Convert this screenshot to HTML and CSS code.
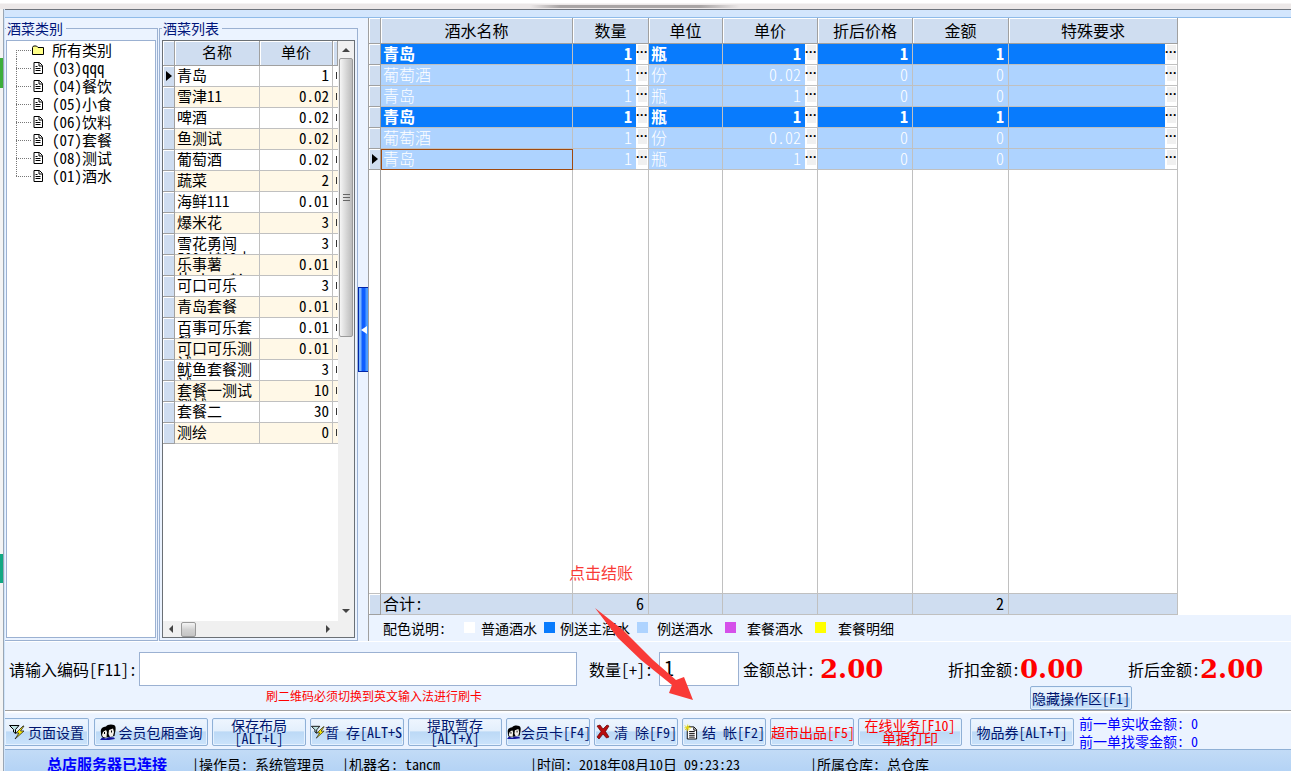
FILE: index.html
```html
<!DOCTYPE html>
<html lang="zh-CN">
<head>
<meta charset="utf-8">
<title>酒水点单</title>
<link rel="stylesheet" href="styles.css">
</head>
<body>
<svg class="symbols" aria-hidden="true">
  <symbol id="i-doc" viewBox="0 0 12 12"><path d="M2 .5h5.500L10.500 3.500v8H2z" fill="#fff" stroke="#000"/><path d="M7 1v3h3M3.500 4.500h2M3.500 6.500h5M3.500 8.500h5" fill="none" stroke="#000"/></symbol>
  <symbol id="i-folder" viewBox="0 0 12 12"><path d="M.5 10.500v-7l1-1.500h3l1.500 1.500h5.500v7z" fill="#ffff88" stroke="#000"/></symbol>
  <symbol id="i-filter" viewBox="0 0 16 16"><path d="M.5 1.500h9.500L6.500 5.500v4L4.500 8V5.500z" fill="#bfe3e3" stroke="#000"/><path d="M14 2L7 9h3l-4 6 9-8h-3.500l3.500-5z" fill="#ffee00" stroke="#222" stroke-width=".8"/></symbol>
  <symbol id="i-people" viewBox="0 0 16 16"><path d="M1 9C0 4 3 3 6 2.500 7 0 15-.5 15.500 3c.5 3-.5 5-1 9L9 13l-6 1C1 12 1 11 1 9z" fill="#000"/><path d="M3 8l3-2 1 2-.5 5.500L3 13l-1-2zM9 6l4-1.500L14 8l-1 4-3 1-1.500-3z" fill="#f2eee8"/><path d="M0 16l2-2.500 4 1L9 13l5 .5 1 1.500-6 1z" fill="#14149a"/><path d="M4.500 8v2M11.500 6.500v2" stroke="#000"/></symbol>
  <symbol id="i-cross" viewBox="0 0 14 16"><path d="M1 2l3-1 3 4 4-4 2 1-3.500 5.500L13 13l-2.500 1L7 10l-4 5-2-2 4-5.500z" fill="#b80c0c" stroke="#5e0000" stroke-width=".7"/></symbol>
  <symbol id="i-newdoc" viewBox="0 0 15 16"><path d="M3.500 2.500h7l3 3v10h-10z" fill="#fff" stroke="#000"/><path d="M10.500 3v3h3M5.500 7.500h6M5.500 9.500h6M5.500 11.500h6M5.500 13.500h6" fill="none" stroke="#000"/><path d="M4 0v7M.5 3.500h7M1 1l5 5M6 1L1 6" stroke="#e8d800"/></symbol>
</svg>
<div class="desktop">
  <div class="behind-top" aria-hidden="true"></div>
  <div class="behind-left" aria-hidden="true"></div>
  <main class="window">
    <div class="titlebar"></div>
    <div class="workspace">
      <fieldset class="group categories">
        <legend>酒菜类别</legend>
        <ul class="tree">
          <li><span class="branch"></span><svg><use href="#i-folder"/></svg>所有类别</li>
          <li><span class="branch"></span><svg><use href="#i-doc"/></svg>(03)qqq</li>
          <li><span class="branch"></span><svg><use href="#i-doc"/></svg>(04)餐饮</li>
          <li><span class="branch"></span><svg><use href="#i-doc"/></svg>(05)小食</li>
          <li><span class="branch"></span><svg><use href="#i-doc"/></svg>(06)饮料</li>
          <li><span class="branch"></span><svg><use href="#i-doc"/></svg>(07)套餐</li>
          <li><span class="branch"></span><svg><use href="#i-doc"/></svg>(08)测试</li>
          <li><span class="branch"></span><svg><use href="#i-doc"/></svg>(01)酒水</li>
        </ul>
      </fieldset>
      <fieldset class="group items">
        <legend>酒菜列表</legend>
        <div class="listbox">
          <div class="list-view">
            <table class="list">
              <colgroup><col class="c-mark"><col class="c-item"><col class="c-cost"><col class="c-more"></colgroup>
              <thead><tr><th></th><th>名称</th><th>单价</th><th></th></tr></thead>
              <tbody>
                <tr><th class="current"></th><td><div>青岛</div></td><td>1</td><td></td></tr>
                <tr><th></th><td><div>雪津11</div></td><td>0.02</td><td></td></tr>
                <tr><th></th><td><div>啤酒</div></td><td>0.02</td><td></td></tr>
                <tr><th></th><td><div>鱼测试</div></td><td>0.02</td><td></td></tr>
                <tr><th></th><td><div>葡萄酒</div></td><td>0.02</td><td></td></tr>
                <tr><th></th><td><div>蔬菜</div></td><td>2</td><td></td></tr>
                <tr><th></th><td><div>海鲜111</div></td><td>0.01</td><td></td></tr>
                <tr><th></th><td><div>爆米花</div></td><td>3</td><td></td></tr>
                <tr><th></th><td><div>雪花勇闯<br>500ml*12支</div></td><td>3</td><td></td></tr>
                <tr><th></th><td><div>乐事薯<br>片~long*^</div></td><td>0.01</td><td></td></tr>
                <tr><th></th><td><div>可口可乐</div></td><td>3</td><td></td></tr>
                <tr><th></th><td><div>青岛套餐</div></td><td>0.01</td><td></td></tr>
                <tr><th></th><td><div>百事可乐套餐</div></td><td>0.01</td><td></td></tr>
                <tr><th></th><td><div>可口可乐测试</div></td><td>0.01</td><td></td></tr>
                <tr><th></th><td><div>鱿鱼套餐测试</div></td><td>3</td><td></td></tr>
                <tr><th></th><td><div>套餐一测试测试</div></td><td>10</td><td></td></tr>
                <tr><th></th><td><div>套餐二</div></td><td>30</td><td></td></tr>
                <tr><th></th><td><div>测绘</div></td><td>0</td><td></td></tr>
              </tbody>
            </table>
          </div>
          <div class="vbar" aria-hidden="true"><i class="arrow up"></i><span class="vthumb"></span><i class="arrow down"></i></div>
          <div class="hbar" aria-hidden="true"><i class="arrow left"></i><span class="hthumb"></span><i class="arrow right"></i></div>
        </div>
      </fieldset>
      <div class="splitter"><button type="button" aria-label="收起"><i></i></button></div>
      <section class="orders">
        <div class="order-view">
          <table class="order">
            <colgroup><col class="c-mark"><col class="c-name"><col class="c-qty"><col class="c-unit"><col class="c-price"><col class="c-price"><col class="c-sum"><col class="c-note"></colgroup>
            <thead><tr><th></th><th>酒水名称</th><th>数量</th><th>单位</th><th>单价</th><th>折后价格</th><th>金额</th><th>特殊要求</th></tr></thead>
            <tbody>
              <tr class="main"><th></th><td>青岛</td><td class="pick"><div>1<button type="button">···</button></div></td><td>瓶</td><td class="pick"><div>1<button type="button">···</button></div></td><td class="num">1</td><td class="num">1</td><td class="pick"><div><button type="button">···</button></div></td></tr>
              <tr class="gift"><th></th><td>葡萄酒</td><td class="pick"><div>1<button type="button">···</button></div></td><td>份</td><td class="pick"><div>0.02<button type="button">···</button></div></td><td class="num">0</td><td class="num">0</td><td class="pick"><div><button type="button">···</button></div></td></tr>
              <tr class="gift"><th></th><td>青岛</td><td class="pick"><div>1<button type="button">···</button></div></td><td>瓶</td><td class="pick"><div>1<button type="button">···</button></div></td><td class="num">0</td><td class="num">0</td><td class="pick"><div><button type="button">···</button></div></td></tr>
              <tr class="main"><th></th><td>青岛</td><td class="pick"><div>1<button type="button">···</button></div></td><td>瓶</td><td class="pick"><div>1<button type="button">···</button></div></td><td class="num">1</td><td class="num">1</td><td class="pick"><div><button type="button">···</button></div></td></tr>
              <tr class="gift"><th></th><td>葡萄酒</td><td class="pick"><div>1<button type="button">···</button></div></td><td>份</td><td class="pick"><div>0.02<button type="button">···</button></div></td><td class="num">0</td><td class="num">0</td><td class="pick"><div><button type="button">···</button></div></td></tr>
              <tr class="gift"><th class="current"></th><td class="focus">青岛</td><td class="pick"><div>1<button type="button">···</button></div></td><td>瓶</td><td class="pick"><div>1<button type="button">···</button></div></td><td class="num">0</td><td class="num">0</td><td class="pick"><div><button type="button">···</button></div></td></tr>
              <tr class="filler"><td>&nbsp;</td><td></td><td></td><td></td><td></td><td></td><td></td><td></td></tr>
            </tbody>
            <tfoot><tr><th></th><td>合计:</td><td class="num">6</td><td></td><td></td><td></td><td class="num">2</td><td></td></tr></tfoot>
          </table>
        </div>
        <div class="key">
          <span class="key-title">配色说明:</span>
          <span class="key-item normal">普通酒水</span>
          <span class="key-item host">例送主酒水</span>
          <span class="key-item free">例送酒水</span>
          <span class="key-item combo">套餐酒水</span>
          <span class="key-item detail">套餐明细</span>
        </div>
      </section>
    </div>
    <form class="entry">
      <label class="l-code" for="code">请输入编码[F11]:</label>
      <input class="f-code" id="code" type="text">
      <label class="l-qty" for="qty">数量[+]:</label>
      <input class="f-qty" id="qty" type="text" value="1">
      <span class="t-total">金额总计:</span><strong>2.00</strong>
      <span>折扣金额:</span><strong>0.00</strong>
      <span>折后金额:</span><strong>2.00</strong>
      <p class="hint">刷二维码必须切换到英文输入法进行刷卡</p>
      <button class="btn hide" type="button">隐藏操作区[F1]</button>
    </form>
    <div class="toolbar">
      <button type="button" class="btn w84 first"><svg><use href="#i-filter"/></svg>页面设置</button>
      <button type="button" class="btn w114"><svg><use href="#i-people"/></svg>会员包厢查询</button>
      <button type="button" class="btn w94 two">保存布局<br>[ALT+L]</button>
      <button type="button" class="btn w94 flush"><svg><use href="#i-filter"/></svg>暂 存[ALT+S]</button>
      <button type="button" class="btn w94 two">提取暂存<br>[ALT+X]</button>
      <button type="button" class="btn w84 flush"><svg><use href="#i-people"/></svg>会员卡[F4]</button>
      <button type="button" class="btn w84 flush spaced"><svg><use href="#i-cross"/></svg>清 除[F9]</button>
      <button type="button" class="btn w84 flush spaced"><svg><use href="#i-newdoc"/></svg>结 帐[F2]</button>
      <button type="button" class="btn w84 red flush">超市出品[F5]</button>
      <button type="button" class="btn w104 two red">在线业务[F10]<br>单据打印</button>
      <button type="button" class="btn w104 coupon">物品券[ALT+T]</button>
      <p class="previous">前一单实收金额: 0<br>前一单找零金额: 0</p>
    </div>
    <footer class="status">
      <b>总店服务器已连接</b><span>|操作员: 系统管理员</span><span>|机器名: tancm</span><span>|时间: 2018年08月10日 09:23:23</span><span>|所属仓库: 总仓库</span>
    </footer>
  </main>
  <div class="callout">
    <span>点击结账</span>
    <svg viewBox="0 0 126 136"><path d="M26 43L54 65 84 95 107 115 115 112 124 135 100 128 103 120 72 95 49 73z" fill="#f93a37"/></svg>
  </div>
</div>
</body>
</html>
```
FILE: styles.css
```css
* { box-sizing: border-box; }
body {
  margin: 0;
  font-family: "Noto Sans CJK SC", sans-serif;
  font-feature-settings: "hwid";
  font-size: 14px;
  color: #000;
}
button, input { font: inherit; font-feature-settings: inherit; color: inherit; }
p, ul { margin: 0; padding: 0; }
table { border-collapse: separate; border-spacing: 0; table-layout: fixed; }
.symbols { display: none; }

.desktop {
  position: relative;
  display: grid;
  grid-template: 9px 1fr / 5px 1fr;
  height: 100vh;
  overflow: hidden;
}
.behind-top {
  grid-column: 1 / 3;
  background:
    linear-gradient(90deg, transparent 0 530px, #a9a5a5 560px 700px, transparent 740px) 0 5px / 100% 3px no-repeat,
    linear-gradient(#fff 0 3px, #ece8e8 4px);
}
.behind-left {
  background:
    linear-gradient(#3dae3d, #3dae3d) 0 49px / 3px 30px no-repeat,
    linear-gradient(#12a883, #12a883) 0 545px / 3px 29px no-repeat,
    linear-gradient(90deg, #f4f4f4 0 3px, #9aa6b4 3px 4px, #cfe4fb 4px);
}
.window { display: flex; flex-direction: column; min-width: 0; min-height: 0; background: #ebf3ff; }
.titlebar { flex: none; height: 9px; border-top: 1px solid #6d737c; border-bottom: 1px solid #8fbbe9; background: #d3e6fd; }

.workspace { flex: 1; display: flex; min-height: 0; border-bottom: 1px solid #fff; }
.group {
  display: flex;
  flex-direction: column;
  min-width: 0;
  margin: 2px 0 0;
  padding: 0 1px 2px;
  border: 1px solid #9bb1d2;
  border-left-width: 0;
}
.group legend { padding: 0 3px 0 1px; line-height: 16px; color: #00157a; }
.categories { width: 153px; flex: none; }
.items { width: 199px; flex: none; border-left-width: 1px; margin-left: 1px; padding: 0 2px 2px; }
.tree { flex: 1; margin-top: 4px; padding-left: 9px; border: 1px solid #9bb1d2; background: #fff; list-style: none; font-size: 15px; }
.tree li { display: flex; align-items: center; height: 18px; line-height: 18px; white-space: nowrap; }
.tree svg { width: 12px; height: 12px; margin: 0 8px 0 1px; }
.branch {
  width: 15px;
  height: 18px;
  background:
    repeating-linear-gradient(90deg, #777 0 1px, transparent 1px 2px) 0 9px / 15px 1px no-repeat,
    repeating-linear-gradient(#777 0 1px, transparent 1px 2px) 0 0 / 1px 18px no-repeat;
}
.tree li:first-child .branch { background-position: 0 9px, 0 9px; }
.tree li:last-child .branch { background-size: 15px 1px, 1px 9px; }

.listbox { flex: 1; min-height: 0; display: grid; grid-template: 1fr 16px / 1fr 16px; margin-top: 4px; border: 1px solid #6b7075; background: #fff; }
.list-view { overflow: hidden; min-width: 0; }
.list { width: 100%; font-size: 15px; }
.c-mark { width: 12px; }
.c-item { width: 85px; }
.c-cost { width: 73px; }
th { font-weight: inherit; padding: 0; background: #cfddf0; border: 1px solid #a0a0a0; border-width: 0 1px 1px 0; box-shadow: inset 1px 1px #fff; }
td { padding: 0; border: 1px solid #c0c0c0; border-width: 0 1px 1px 0; overflow: hidden; white-space: nowrap; }
.list thead th { height: 25px; line-height: 22px; padding-bottom: 2px; }
.list td { height: 21px; line-height: 18px; text-align: right; padding: 0 3px 2px 0; }
.list td div { height: 20px; padding: 1px 4px 0 2px; line-height: 15px; text-align: left; white-space: normal; overflow: hidden; word-break: break-all; }
.list td:nth-child(2) { padding: 0; }
.list td:last-child { padding: 0; border-right: 0; background: linear-gradient(#333, #333) 3px 6px / 1px 7px no-repeat; }
.list tbody tr:nth-child(even) { background: #fff8e7; }
.current::before { content: ""; display: block; width: 0; height: 0; margin-left: 3px; border: 5px solid transparent; border-left: 6px solid #000; border-right: 0; }

.vbar, .hbar { display: flex; background: #f0f0f0; align-items: center; }
.vbar { flex-direction: column; }
.hbar { grid-column: 1 / 3; padding: 0 20px 0 2px; }
.arrow { flex: none; width: 0; height: 0; border: 4px solid transparent; }
.up { margin: 3px 0 6px; border-bottom-color: #444; }
.down { margin: auto 0 4px; border-top-color: #444; }
.left { border-right-color: #444; }
.right { margin-left: auto; border-left-color: #444; }
.vthumb {
  width: 14px;
  height: 279px;
  border: 1px solid #9a9a9a;
  border-radius: 2px;
  background: repeating-linear-gradient(#666 0 1px, transparent 1px 3px) 3px center / 7px 8px no-repeat, linear-gradient(90deg, #f5f5f5, #d2d2d2 60%, #bcbcbc);
}
.hthumb { width: 15px; height: 15px; margin-left: 8px; border: 1px solid #9a9a9a; border-radius: 2px; background: linear-gradient(#f5f5f5, #d2d2d2 50%, #c4c4c4); }

.splitter { flex: none; display: flex; width: 11px; border-right: 1px solid #a0a0a0; align-items: center; }
.splitter button {
  display: flex;
  align-items: center;
  justify-content: center;
  width: 10px;
  height: 85px;
  padding: 0;
  border: 1px solid #0024a8;
  border-right: 0;
  background: linear-gradient(90deg, #79b5ff 0 2px, #0f5eff 3px 6px, #4b9bff 7px);
}
.splitter i { border: 4px solid transparent; border-right: 6px solid #fff; border-left: 0; }

.orders { flex: 1; display: flex; flex-direction: column; min-width: 0; }
.order-view { flex: 1; min-height: 0; background: #fff; }
.order { width: 809px; height: 100%; font-size: 16px; }
.c-name { width: 192px; }
.c-qty { width: 76px; }
.c-unit { width: 74px; }
.c-price { width: 95px; }
.c-sum { width: 96px; }
.c-note { width: 169px; }
.order thead th { height: 26px; line-height: 22px; padding-bottom: 2px; }
.order tbody td, .order tfoot td { height: 21px; line-height: 18px; padding: 0 0 2px 2px; }
.order tbody .num, .order tfoot .num { text-align: right; padding-right: 4px; }
.order tbody .pick { padding: 0; }
.pick div { display: flex; justify-content: flex-end; }
.pick button {
  width: 12px;
  height: 20px;
  margin-left: 4px;
  padding: 0 0 3px;
  border: 0;
  background: linear-gradient(#f0f0f0, #f0f0f0) 2px 1px / 9px 15px no-repeat, #fff;
  color: #000;
  font: bold 12px/17px "Liberation Sans", sans-serif;
  text-align: center;
}
.main { background: #087bfd; color: #fff; font-weight: bold; }
.gift { background: #aed3ff; color: #fff; font-weight: 300; }
.order .focus { outline: 1px solid #a04a10; outline-offset: -1px; }
.order .filler td { height: auto; }
.order .filler td:first-child { border-right-color: #a0a0a0; }
tfoot tr { background: #cfddf0; }

.key { display: flex; align-items: center; height: 26px; padding: 0 0 1px 14px; line-height: 18px; white-space: nowrap; }
.key-title { width: 81px; }
.key-item { display: flex; align-items: center; }
.key-item::before { content: ""; width: 11px; height: 11px; background: #fff; }
.normal { gap: 6px; margin-right: 7px; }
.host { gap: 5px; margin-right: 7px; }
.host::before { background: #087bfd; }
.free { gap: 9px; margin-right: 12px; }
.free::before { background: #aed3ff; }
.combo { gap: 11px; margin-right: 12px; }
.combo::before { background: #d550ea; }
.detail { gap: 12px; }
.detail::before { background: #ff0; }

.entry {
  flex: none;
  display: grid;
  grid-template: 34px 24px / 134px 438px 82px 80px 81px 128px 72px 108px 72px 1fr;
  padding-top: 10px;
  align-items: center;
  white-space: nowrap;
  font-size: 16px;
  line-height: 24px;
  border-bottom: 1px solid #a0a0a0;
}
.entry input { width: 100%; height: 34px; padding: 0 4px 4px; border: 1px solid #9bb1d2; background: #fff; font-size: 20px; }
.l-code { padding-left: 4px; }
.l-qty { padding-left: 12px; }
.t-total { padding-left: 4px; }
.entry strong { font-family: "DejaVu Serif", serif; font-size: 26px; line-height: 34px; color: #f00; }
.hint { grid-column: 2; padding-left: 127px; font-size: 12px; line-height: 20px; color: #f00; align-self: start; }
.btn {
  display: flex;
  align-items: center;
  justify-content: center;
  gap: 3px;
  flex: none;
  height: 28px;
  padding: 0;
  border: 1px solid #8fb0d6;
  border-radius: 2px;
  background: linear-gradient(#eef5fe 0, #e3effc 45%, #bcd9f6 50%, #cbe3fb 100%);
  box-shadow: inset 0 0 0 1px #e4f1ff;
  color: #00156e;
  font-size: 14px;
  line-height: 14px;
  white-space: nowrap;
  overflow: hidden;
}
.hide { grid-column: 8 / 10; margin-left: 10px; width: 102px; height: 24px; }

.toolbar { flex: none; display: flex; gap: 4px; padding: 7px 0 3px; background: linear-gradient(#fff 0 1px, #ebf3ff 3px); }
.btn svg { width: 16px; height: 18px; flex: none; }
.w84 { width: 84px; }
.w94 { width: 94px; }
.w104 { width: 104px; }
.w114 { width: 114px; margin-left: 1px; }
.first { border-left: 0; border-radius: 0 2px 2px 0; }
.two { line-height: 13px; overflow: visible; }
.flush { justify-content: flex-start; gap: 0; }
.flush svg { width: 14px; }
.spaced { gap: 4px; padding-left: 1px; }
.red { color: #f00; }
.coupon { margin-left: 4px; }
.previous { margin: -4px 0; padding-left: 1px; color: #00f; line-height: 18px; white-space: nowrap; }

.status {
  flex: none;
  display: grid;
  grid-template-columns: 187px 150px 188px 280px 1fr;
  height: 22px;
  padding-top: 5px;
  border-top: 1px solid #8fb0d6;
  background: linear-gradient(#c2dbf6, #b4d3f5);
  line-height: 18px;
  white-space: nowrap;
}
.status b { padding-left: 42px; font-size: 15px; color: #00f; }

.callout { position: absolute; left: 569px; top: 565px; width: 126px; pointer-events: none; }
.callout span { position: absolute; left: 0; top: 0; font-size: 16px; line-height: 15px; color: #f93a37; }
.callout svg { display: block; width: 126px; height: 136px; }
```
